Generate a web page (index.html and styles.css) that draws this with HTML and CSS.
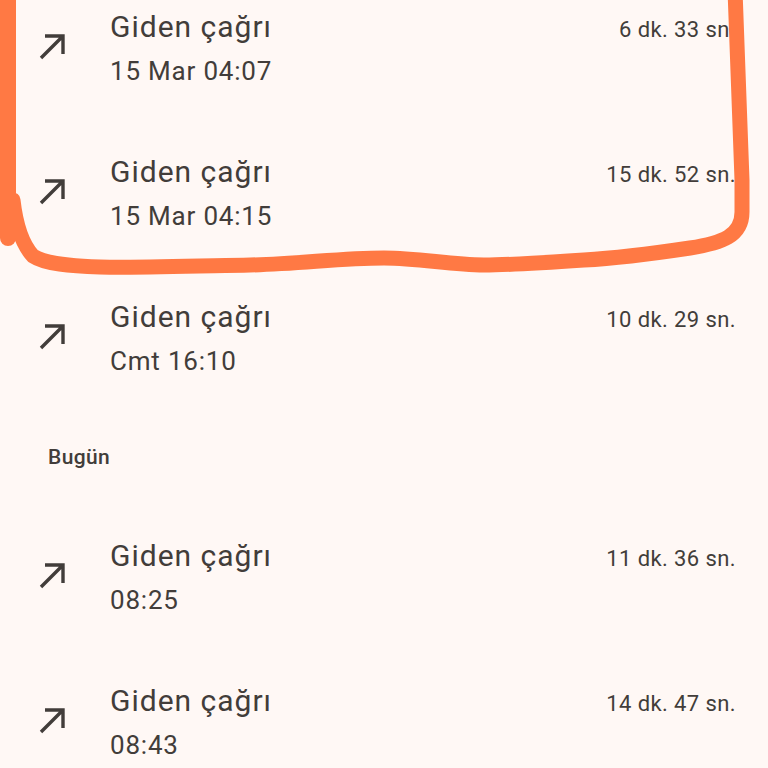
FILE: index.html
```html
<!DOCTYPE html>
<html lang="tr">
<head>
<meta charset="utf-8">
<title>Arama geçmişi</title>
<link rel="stylesheet" href="styles.css">
</head>
<body>
<div class="screen">
  <div class="list">
    <div class="row">
      <svg class="icon" viewBox="0 0 32 32"><path d="M9 6H27V24M27 6L5 28" /></svg>
      <div class="text"><div class="title">Giden çağrı</div><div class="sub">15 Mar 04:07</div></div>
      <div class="dur">6 dk. 33 sn.</div>
    </div>
    <div class="row">
      <svg class="icon" viewBox="0 0 32 32"><path d="M9 6H27V24M27 6L5 28" /></svg>
      <div class="text"><div class="title">Giden çağrı</div><div class="sub">15 Mar 04:15</div></div>
      <div class="dur">15 dk. 52 sn.</div>
    </div>
    <div class="row">
      <svg class="icon" viewBox="0 0 32 32"><path d="M9 6H27V24M27 6L5 28" /></svg>
      <div class="text"><div class="title">Giden çağrı</div><div class="sub">Cmt 16:10</div></div>
      <div class="dur">10 dk. 29 sn.</div>
    </div>
    <div class="header">Bugün</div>
    <div class="row">
      <svg class="icon" viewBox="0 0 32 32"><path d="M9 6H27V24M27 6L5 28" /></svg>
      <div class="text"><div class="title">Giden çağrı</div><div class="sub">08:25</div></div>
      <div class="dur">11 dk. 36 sn.</div>
    </div>
    <div class="row">
      <svg class="icon" viewBox="0 0 32 32"><path d="M9 6H27V24M27 6L5 28" /></svg>
      <div class="text"><div class="title">Giden çağrı</div><div class="sub">08:43</div></div>
      <div class="dur">14 dk. 47 sn.</div>
    </div>
  </div>
  <svg class="mark" viewBox="0 0 768 768">
    <path d="M735,-10 C737,60 740,120 742,180 L742,212 C742,236 722,243 690,248 C650,254 620,258 584,260 C540,263 510,265 484,265 C450,265 420,258 384,258 C340,258 300,264 250,265 C200,266 140,268 100,267 C70,266 45,264 33,256 C22,244 16,226 13,200" />
    <path d="M8,-10 L8,238" class="thick" />
  </svg>
</div>
</body>
</html>
```
FILE: styles.css
```css
html, body {
  margin: 0;
  padding: 0;
  background: #fff8f5;
}
.screen {
  position: relative;
  width: 768px;
  height: 768px;
  overflow: hidden;
  background: #fff8f5;
  font-family: Roboto, "Noto Sans", sans-serif;
  color: #423d3a;
}
.list {
  display: flex;
  flex-direction: column;
  margin-top: -25px;
}
.row {
  height: 145px;
  display: flex;
  align-items: center;
  padding: 0 32px 0 36px;
}
.icon {
  width: 32px;
  height: 32px;
  flex: none;
  margin-top: -4px;
  fill: none;
  stroke: #423d3a;
  stroke-width: 3.4;
}
.text {
  flex: 1;
  margin-left: 42px;
  display: flex;
  flex-direction: column;
  gap: 10px;
}
.title {
  font-size: 30px;
  line-height: 36px;
  letter-spacing: 1px;
}
.sub {
  font-size: 26px;
  line-height: 32px;
  letter-spacing: 0.8px;
}
.dur {
  align-self: flex-start;
  margin-top: 40px;
  font-size: 22px;
  line-height: 30px;
  letter-spacing: 0.4px;
}
.header {
  height: 94px;
  display: flex;
  align-items: center;
  padding-left: 48px;
  font-size: 21px;
  font-weight: 500;
  letter-spacing: 0.4px;
}
.mark {
  position: absolute;
  left: 0;
  top: 0;
  width: 768px;
  height: 768px;
  pointer-events: none;
  fill: none;
  stroke: #ff7944;
  stroke-width: 15;
  stroke-linecap: round;
  stroke-linejoin: round;
}
.mark .thick {
  stroke-width: 16;
}
```
